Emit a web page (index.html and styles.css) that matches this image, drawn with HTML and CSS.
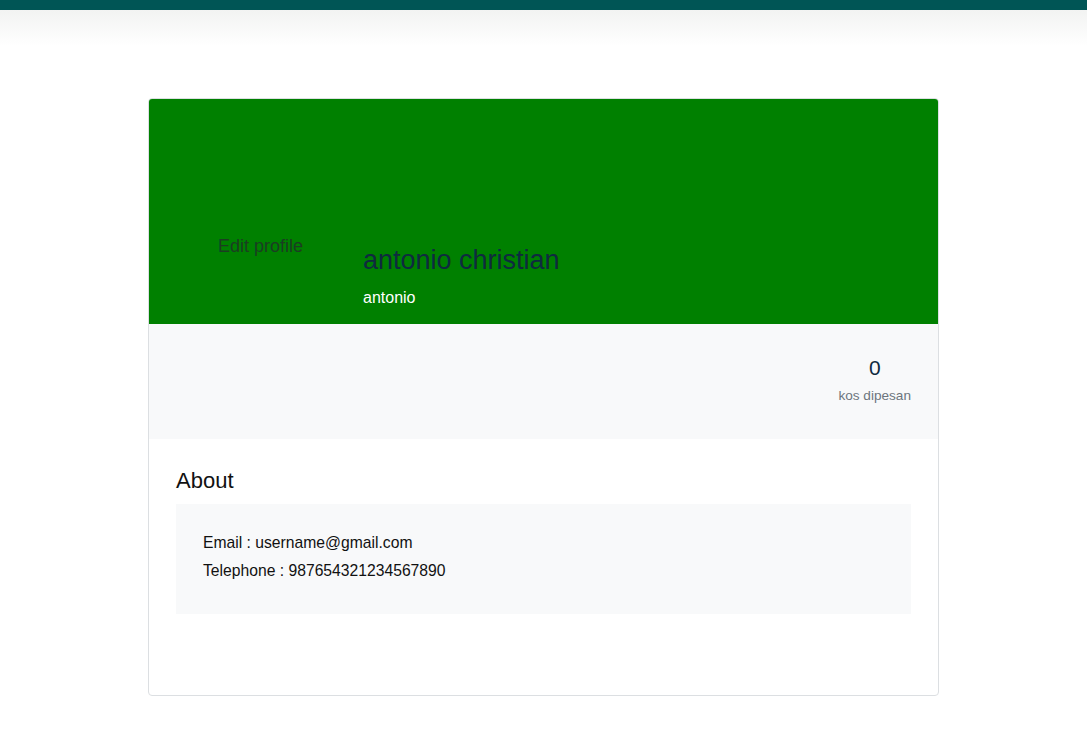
FILE: index.html
```html
<!DOCTYPE html>
<html lang="id">
<head>
<meta charset="utf-8">
<title>Profile</title>
<link rel="stylesheet" href="styles.css">
</head>
<body>
<div class="topbar"></div>
<div class="topshade"></div>
<main class="card">
  <section class="cover">
    <div class="cover-left">
      <span class="edit">Edit profile</span>
    </div>
    <div class="cover-text">
      <h4 class="name">antonio christian</h4>
      <p class="user">antonio</p>
    </div>
  </section>
  <section class="stats">
    <div class="stat">
      <div class="stat-num">0</div>
      <div class="stat-label">kos dipesan</div>
    </div>
  </section>
  <section class="about">
    <h5 class="about-title">About</h5>
    <div class="about-box">
      <p class="line">Email : username@gmail.com</p>
      <p class="line">Telephone : 987654321234567890</p>
    </div>
  </section>
</main>
</body>
</html>
```
FILE: styles.css
```css
* { box-sizing: border-box; }
body {
  margin: 0;
  font-family: "Liberation Sans", Arial, sans-serif;
  color: #212529;
  background: #fff;
}
.topbar {
  height: 10px;
  background: #005555;
}
.topshade {
  height: 36px;
  background: linear-gradient(#f2f3f2, #ffffff);
}
.card {
  width: 791px;
  margin: 52px auto 0;
  border: 1px solid #dcdfe2;
  border-radius: 4px;
  overflow: hidden;
  height: 598px;
}
.cover {
  height: 225px;
  background: #008000;
  display: flex;
}
.cover-left {
  width: 214px;
  padding: 134px 0 0 69px;
}
.edit {
  font-size: 18px;
  color: #1b3d22;
  line-height: 26px;
}
.cover-text {
  padding-top: 145px;
}
.name {
  margin: 0;
  font-size: 27px;
  font-weight: 400;
  line-height: 32px;
  color: #0f2a3f;
}
.user {
  margin: 12px 0 0;
  font-size: 16px;
  line-height: 20px;
  color: #ffffff;
}
.stats {
  height: 115px;
  background: #f8f9fa;
  display: flex;
  justify-content: flex-end;
  padding: 30px 27px 0 0;
}
.stat { text-align: center; }
.stat-num {
  font-size: 21px;
  line-height: 28px;
  color: #0f2a3f;
}
.stat-label {
  font-size: 13.6px;
  line-height: 20px;
  color: #6c757d;
  margin-top: 4px;
}
.about {
  padding: 28px 27px 0 27px;
}
.about-title {
  margin: 0 0 9px;
  font-size: 22px;
  font-weight: 400;
  line-height: 28px;
  color: #111;
}
.about-box {
  background: #f8f9fa;
  height: 110px;
  padding: 25px 27px;
}
.line {
  margin: 0;
  font-size: 15.7px;
  line-height: 28px;
  color: #111;
}
```
